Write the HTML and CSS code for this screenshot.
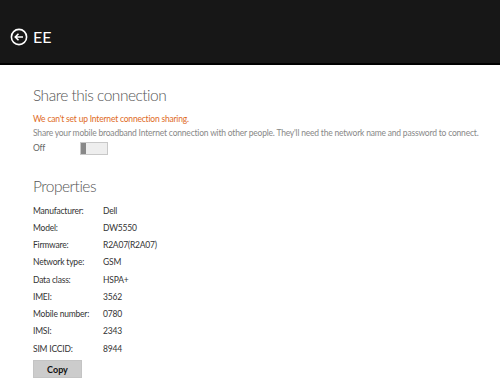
FILE: index.html
```html
<!DOCTYPE html>
<html lang="en">
<head>
  <meta charset="UTF-8" />
  <title>EE</title>
  <link rel="stylesheet" href="styles.css">
</head>
<body>
  <div class="top-bar">
    <button class="back-button" aria-label="Back">
      <svg width="18" height="18" viewBox="0 0 18 18">
        <circle cx="9" cy="9" r="7.6" fill="none" stroke="#fff" stroke-width="1.6"/>
        <path d="M13 9H5.5M8.5 5.8L5.3 9l3.2 3.2" fill="none" stroke="#fff" stroke-width="1.6"/>
      </svg>
    </button>
    <span class="title">EE</span>
  </div>

  <div class="content">
    <h2>Share this connection</h2>
    <p class="warning">We can't set up Internet connection sharing.</p>
    <p class="note">Share your mobile broadband Internet connection with other people. They'll need the network name and password to connect.</p>
    <div class="toggle-row">
      <span class="toggle-label">Off</span>
      <span class="toggle"><span class="thumb"></span></span>
    </div>

    <h2 class="props-title">Properties</h2>
    <div class="props">
      <div class="row"><span class="key">Manufacturer:</span><span>Dell</span></div>
      <div class="row"><span class="key">Model:</span><span>DW5550</span></div>
      <div class="row"><span class="key">Firmware:</span><span>R2A07(R2A07)</span></div>
      <div class="row"><span class="key">Network type:</span><span>GSM</span></div>
      <div class="row"><span class="key">Data class:</span><span>HSPA+</span></div>
      <div class="row"><span class="key">IMEI:</span><span>3562</span></div>
      <div class="row"><span class="key">Mobile number:</span><span>0780</span></div>
      <div class="row"><span class="key">IMSI:</span><span>2343</span></div>
      <div class="row"><span class="key">SIM ICCID:</span><span>8944</span></div>
    </div>
    <button class="copy">Copy</button>
  </div>
</body>
</html>
```

FILE: styles.css
```css
body {
  margin: 0;
  font-family: Lato, "Open Sans", sans-serif;
  background: #fff;
  color: #222;
}

.top-bar {
  background-color: #171717;
  border-bottom: 2px solid #000;
  display: flex;
  align-items: flex-end;
  padding: 0 0 17px 10px;
  height: 46px;
}

.back-button {
  background: none;
  border: none;
  padding: 0;
  width: 18px;
  height: 18px;
  margin-right: 5px;
  display: flex;
}

.title {
  color: #fff;
  font-size: 16px;
  line-height: 18px;
}

.content {
  padding: 0 33px;
  font-size: 8.5px;
  letter-spacing: -0.2px;
}

h2 {
  font-weight: 300;
  font-size: 15.5px;
  letter-spacing: -0.5px;
  color: #555;
  margin: 20px 0 0;
  line-height: 20px;
}

.warning {
  color: #e06a1e;
  margin: 8px 0 0;
  line-height: 13px;
}

.note {
  color: #888;
  margin: 1px 0 0;
  line-height: 13px;
  white-space: nowrap;
}

.toggle-row {
  display: flex;
  align-items: center;
  margin-top: 1px;
  height: 14px;
}

.toggle-label {
  color: #666;
  width: 47px;
}

.toggle {
  width: 26px;
  height: 11px;
  border: 1px solid #c8c8c8;
  background: #eee;
  display: flex;
}

.thumb {
  width: 5px;
  background: #888;
}

.props-title {
  margin-top: 21px;
}

.props {
  margin-top: 6px;
  color: #333;
}

.row {
  display: flex;
  height: 17.25px;
  align-items: center;
}

.key {
  width: 70px;
}

.copy {
  margin-top: 3px;
  width: 49px;
  height: 18px;
  background: #ccc;
  border: 1px solid #c4c4c4;
  font-family: inherit;
  font-size: 9px;
  font-weight: 700;
  color: #111;
  padding: 0;
}
```
